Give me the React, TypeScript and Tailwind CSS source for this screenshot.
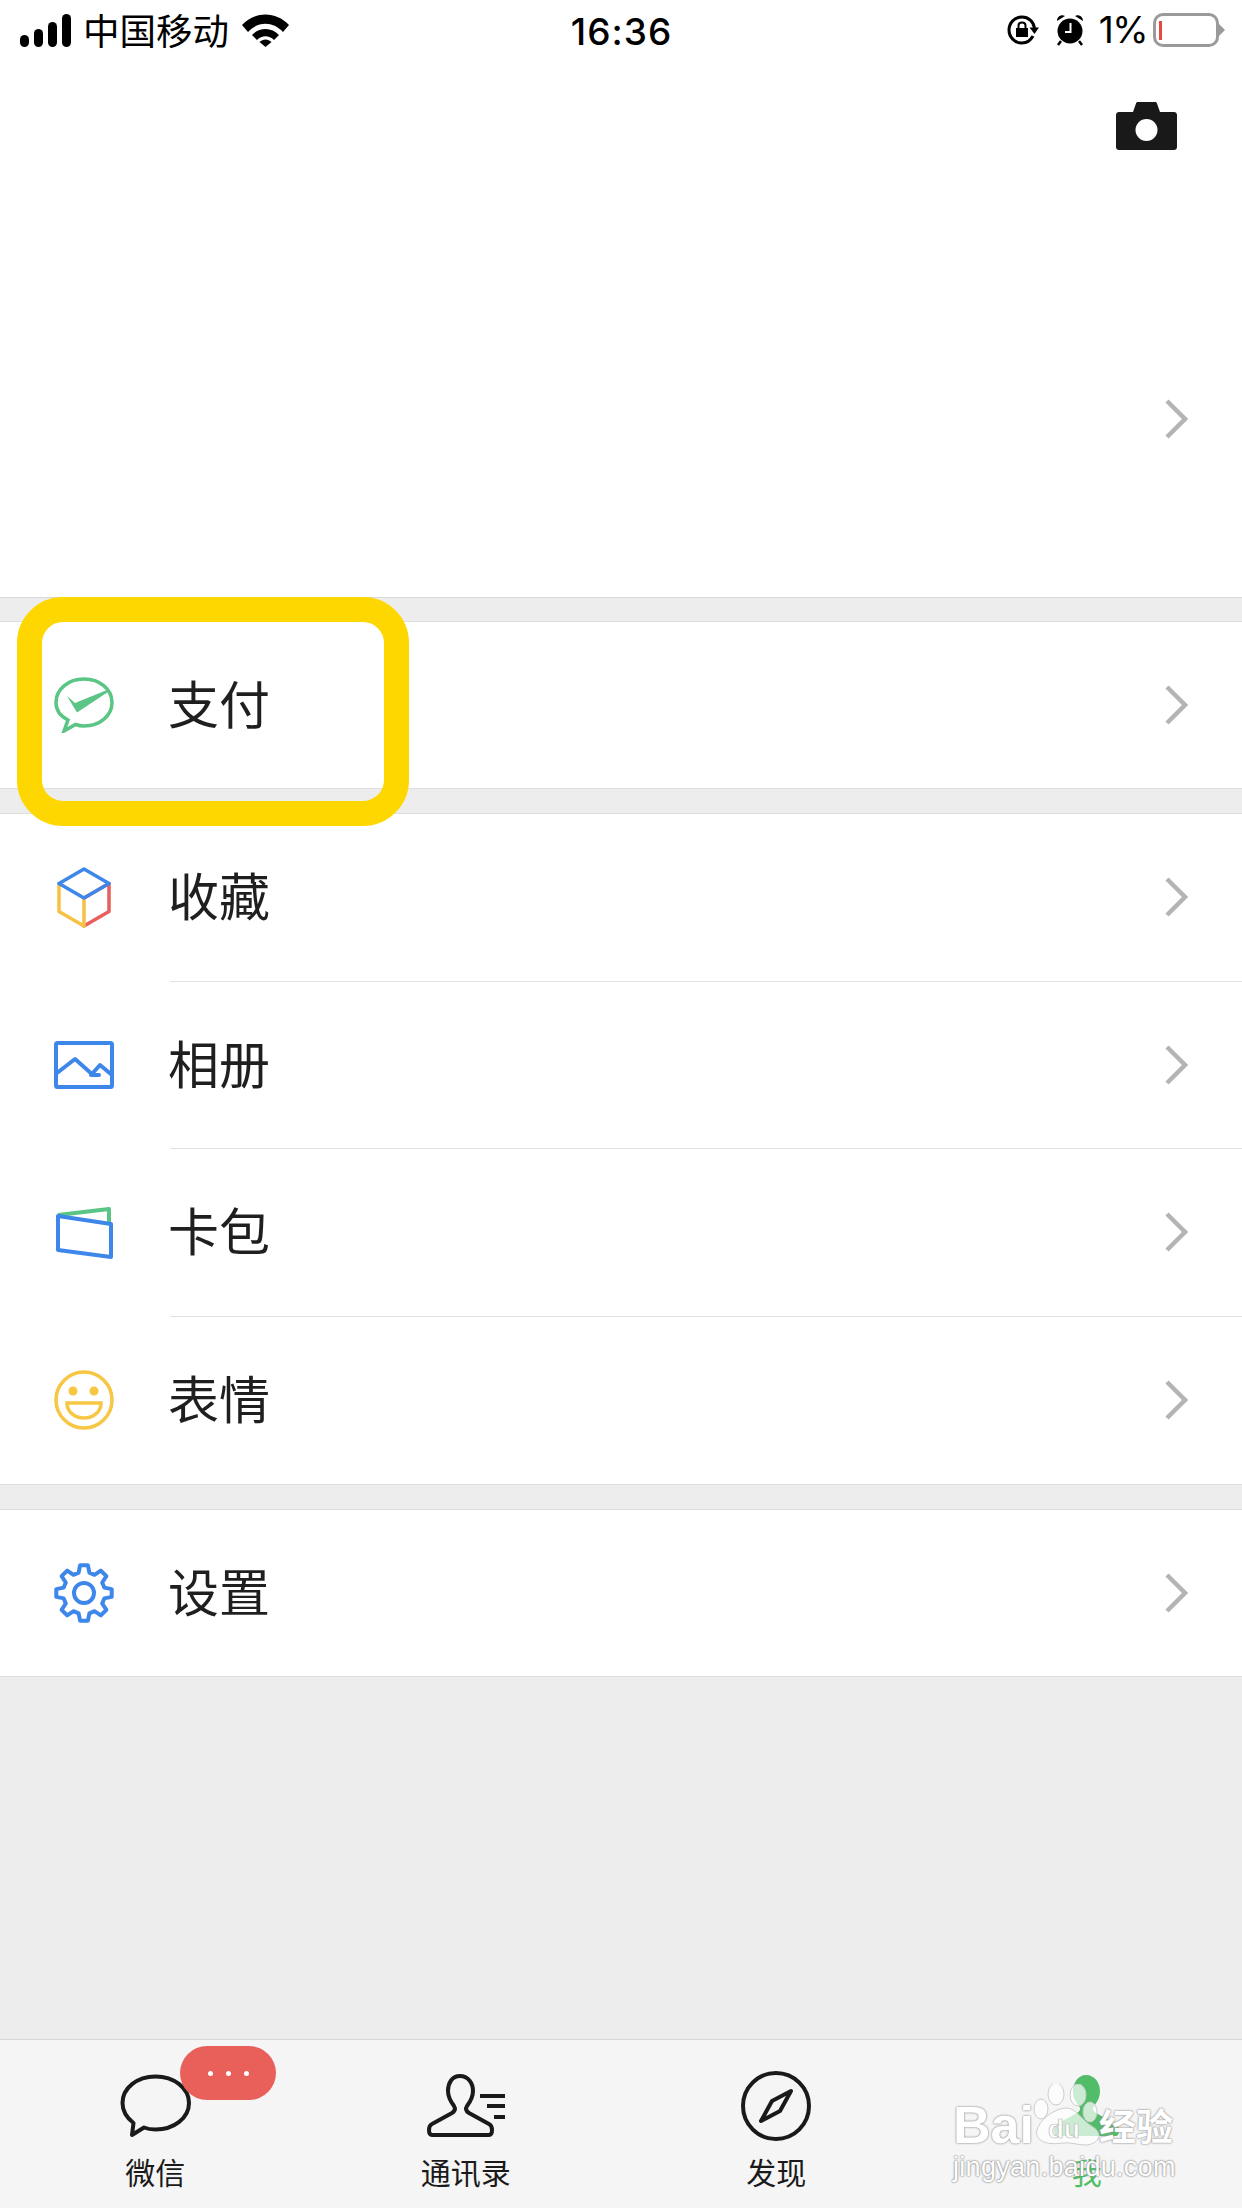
const FONT = "font-['Noto_Sans_CJK_SC','Noto_Sans',sans-serif]"

function Chevron() {
  return (
    <svg width="24" height="40" viewBox="0 0 24 40" fill="none" className="shrink-0">
      <path d="M3 2L21 20L3 38" stroke="#b4b4b4" strokeWidth="4.500" />
    </svg>
  )
}

function PayIcon() {
  return (
    <svg width="60" height="56" viewBox="0 0 60 56" fill="none">
      <path d="M14 43C6 39 2 32.500 2 25.500C2 12.500 14 2 30 2C46 2 58 12.500 58 25.500C58 38.500 46 49 30 49C27 49 24.500 48.500 21.500 47.500L10 54Z" stroke="#5ac584" strokeWidth="3.500" />
      <path d="M13 19L21 26L53 13L54 15L23 35.500Z" fill="#5ac584" />
    </svg>
  )
}

function CubeIcon() {
  return (
    <svg width="54" height="61" viewBox="0 0 54 61" fill="none" strokeWidth="3.500" strokeLinejoin="round" strokeLinecap="round">
      <path d="M27 31L52 16.500V44.500L27 59" stroke="#e85f5c" />
      <path d="M27 31V59L2 44.500V16.500" stroke="#f7c143" />
      <path d="M27 2L52 16.500L27 31L2 16.500Z" stroke="#3e87ea" />
    </svg>
  )
}

function AlbumIcon() {
  return (
    <svg width="60" height="48" viewBox="0 0 60 48" fill="none" stroke="#3e87ea" strokeWidth="4" strokeLinejoin="round">
      <rect x="2" y="2" width="56" height="44" rx="1.500" />
      <path d="M3 32L21 18L39 34H45H37L46 24L58 34" />
    </svg>
  )
}

function CardIcon() {
  return (
    <svg width="57" height="52" viewBox="0 0 57 52" fill="none" strokeWidth="4" strokeLinejoin="round">
      <path d="M2 8L53 2V16" stroke="#5ac584" />
      <path d="M2 9L55 17V50L2 43Z" stroke="#3e87ea" />
    </svg>
  )
}

function SmileIcon() {
  return (
    <svg width="60" height="60" viewBox="0 0 60 60" fill="none">
      <circle cx="30" cy="30" r="28" stroke="#f7c643" strokeWidth="3.500" />
      <circle cx="19" cy="21" r="4.500" fill="#f7c643" />
      <circle cx="40" cy="21" r="4.500" fill="#f7c643" />
      <path d="M13 33H47C47 42 39 48 30 48C21 48 13 42 13 33Z" stroke="#f7c643" strokeWidth="3.500" />
    </svg>
  )
}

function gearPath() {
  const pts: string[] = []
  for (let i = 0; i < 8; i++) {
    const a = (i * Math.PI) / 4 - Math.PI / 2
    const p = (r: number, off: number) =>
      `${(30 + r * Math.cos(a + off)).toFixed(1)} ${(30 + r * Math.sin(a + off)).toFixed(1)}`
    pts.push(`${i === 0 ? 'M' : 'L'}${p(21, -0.26)}L${p(28, -0.14)}L${p(28, 0.14)}L${p(21, 0.26)}`)
  }
  return pts.join('') + 'Z'
}

function GearIcon() {
  return (
    <svg width="60" height="60" viewBox="0 0 60 60" fill="none" stroke="#3e87ea" strokeWidth="4" strokeLinejoin="round">
      <path d={gearPath()} />
      <circle cx="30" cy="30" r="10" />
    </svg>
  )
}

function Row({ icon, label, divider, short }: { icon: React.ReactNode; label: string; divider?: boolean; short?: boolean }) {
  return (
    <div className={`flex items-stretch bg-white ${short ? 'h-[166px]' : 'h-[167.500px]'}`}>
      <div className="flex w-[170px] shrink-0 items-center pl-[54px]">
        <div className="flex w-[60px] items-center justify-center">{icon}</div>
      </div>
      <div className={`flex flex-1 items-center justify-between pr-[54px] ${divider ? 'border-b border-[#e2e2e2]' : ''}`}>
        <span className="-ml-[2px] pb-[5px] text-[51px] leading-none text-[#1f1f1f]">{label}</span>
        <Chevron />
      </div>
    </div>
  )
}

function StatusBar() {
  return (
    <div className="flex h-[60px] items-start justify-between px-[17px] pt-[13px] text-black">
      <div className="flex flex-1 items-center pl-[3px]">
        <div className="flex h-[33px] items-end gap-[5px]">
          <div className="h-[12px] w-[9px] rounded-full bg-black" />
          <div className="h-[18px] w-[9px] rounded-full bg-black" />
          <div className="h-[25px] w-[9px] rounded-full bg-black" />
          <div className="h-[33px] w-[9px] rounded-full bg-black" />
        </div>
        <span className="ml-[12px] whitespace-nowrap text-[36.500px] leading-[34px]">中国移动</span>
        <svg width="47" height="33" viewBox="0 0 47 33" className="ml-[13px]">
          <path d="M0 11C13 -3 34 -3 47 11L41 18C31 7 16 7 6 18Z" fill="#000" />
          <path d="M10 21C17 13 30 13 37 21L32 26C27 21 20 21 15 26Z" fill="#000" />
          <path d="M17.500 28C21 24.500 26 24.500 29.500 28L23.500 33Z" fill="#000" />
        </svg>
      </div>
      <span className="-mt-[1px] mr-[2px] font-['Inter',sans-serif] text-[37px] font-medium leading-[40px] tracking-[1px]">16:36</span>
      <div className="flex flex-1 items-center justify-end">
        <svg width="32" height="30" viewBox="0 0 32 30" fill="none">
          <path d="M26 21C23.500 25.500 19.500 28 15 28C7.500 28 2 22 2 15C2 8 7.500 2 15 2C21.500 2 26.500 6.500 27.500 13" stroke="#000" strokeWidth="3" />
          <path d="M22.500 12.500H32L27.500 19Z" fill="#000" />
          <rect x="9" y="13" width="12" height="9" fill="#000" />
          <path d="M11.500 13V10.500C11.500 6.500 18.500 6.500 18.500 10.500V13" stroke="#000" strokeWidth="2" />
        </svg>
        <svg width="28" height="32" viewBox="0 0 28 32" className="ml-[17px]">
          <circle cx="14" cy="17" r="12.500" fill="#000" />
          <path d="M1 7C1 2 6 0 9 2Z M27 7C27 2 22 0 19 2Z" fill="#000" />
          <path d="M5 27L2 31M23 27L26 31" stroke="#000" strokeWidth="2.500" />
          <path d="M14.500 9V18H9" stroke="#fff" strokeWidth="2" fill="none" />
        </svg>
        <span className="ml-[15px] font-['Inter',sans-serif] text-[37px] leading-[34px] tracking-[-1.500px]">1%</span>
        <div className="ml-[6px] flex items-center">
          <div className="flex h-[34px] w-[66px] items-center rounded-[10px] border-[3px] border-[#9a9a9a] pl-[3px]">
            <div className="h-[19px] w-[3px] bg-[#e8483f]" />
          </div>
          <div className="h-0 w-0 border-y-[6px] border-l-[6px] border-y-transparent border-l-[#9a9a9a]" />
        </div>
      </div>
    </div>
  )
}

function ChatTab() {
  return (
    <svg width="72" height="64" viewBox="0 0 72 64" fill="none" className="ml-[2px]">
      <path d="M13.500 49C6.500 43.500 2.500 37 2.500 29C2.500 14 17 2.500 35.500 2.500C54 2.500 69 14 69 29C69 44 54 55.500 35.500 55.500C31.500 55.500 27.500 55 24 53.500L12 61Z" stroke="#1a1a1a" strokeWidth="4" strokeLinejoin="round" />
    </svg>
  )
}

function ContactsTab() {
  return (
    <svg width="78" height="64" viewBox="0 0 78 64" fill="none">
      <path d="M33 2C25 2 21 9 21 17C21 24 24 28 27 32C29 35 28 37 25 39L5 50C1 52 1 61 5 61H62C66 61 66 52 62 50L42 39C39 37 38 35 40 32C43 28 46 24 46 17C46 9 41 2 33 2Z" stroke="#1a1a1a" strokeWidth="4" strokeLinejoin="round" />
      <rect x="53" y="20" width="25" height="4" fill="#1a1a1a" />
      <rect x="60" y="30" width="18" height="4" fill="#1a1a1a" />
      <rect x="67" y="41" width="11" height="4" fill="#1a1a1a" />
    </svg>
  )
}

function DiscoverTab() {
  return (
    <svg width="70" height="70" viewBox="0 0 70 70" fill="none" stroke="#1a1a1a" strokeWidth="4" strokeLinejoin="round">
      <circle cx="35" cy="35" r="33" />
      <path d="M50 20L31 30L20 50L39 40Z" />
    </svg>
  )
}

function MeTab() {
  return (
    <svg width="67" height="64" viewBox="0 0 67 64">
      <path d="M33 1C25 1 20 9 20 17C20 24 23 28 26 32C28 35 27 37 24 39L4 50C0 52 0 62 4 62H63C67 62 67 52 63 50L43 39C40 37 39 35 41 32C44 28 47 24 47 17C47 9 42 1 33 1Z" fill="#52bd69" />
    </svg>
  )
}

function Tab({ icon, label, active, children }: { icon: React.ReactNode; label: string; active?: boolean; children?: React.ReactNode }) {
  return (
    <div className="relative flex flex-col items-center">
      <div className="flex h-[72px] items-center">{icon}</div>
      <span className={`mt-[12px] text-[30px] leading-[34px] ${active ? 'text-[#52bd69]' : 'text-[#1a1a1a]'}`}>{label}</span>
      {children}
    </div>
  )
}

function Watermark() {
  return (
    <div className="absolute left-[953px] top-[2084px] flex flex-col items-start whitespace-nowrap text-white">
      <div className="flex h-[62px] items-end">
        <span className="font-['Liberation_Sans',sans-serif] text-[52px] font-bold leading-[42px] [text-shadow:0_0_2px_#999,0_0_2px_#999]">Bai</span>
        <svg width="78" height="62" viewBox="0 0 78 62" className="-ml-[3px] shrink-0">
          <g fill="#fff" fillOpacity="0.7" stroke="#ccc" strokeWidth="1">
            <ellipse cx="25" cy="10" rx="8" ry="11" />
            <ellipse cx="47" cy="11" rx="8" ry="11" />
            <ellipse cx="10" cy="25" rx="7" ry="10" />
            <ellipse cx="59" cy="28" rx="7" ry="10" />
            <path d="M35 24C46 24 50 36 62 43C74 51 66 61 54 61C46 61 40 58 32 59C20 61 3 59 6 46C8 36 24 24 35 24Z" />
          </g>
          <text x="17" y="54" fontSize="26" fontWeight="700" fill="#fff" stroke="#bbb" strokeWidth="0.700" fontFamily="Liberation Sans">du</text>
        </svg>
        <span className="-ml-[10px] text-[37px] font-bold leading-[42px] [text-shadow:0_0_2px_#999,0_0_2px_#999]">经验</span>
      </div>
      <span className="mt-[5px] font-['Liberation_Sans',sans-serif] text-[27px] leading-[32px] tracking-[0.300px] [text-shadow:0_0_2px_#888,0_0_2px_#888]">jingyan.baidu.com</span>
    </div>
  )
}

export default function App() {
  return (
    <div className={`relative flex h-[2208px] w-[1242px] flex-col overflow-hidden bg-[#ededed] ${FONT}`}>
      <div className="flex h-[598px] flex-col border-b border-[#d9d9d9] bg-white">
        <StatusBar />
        <div className="mt-[42px] flex justify-end pr-[65px]">
          <svg width="61" height="48" viewBox="0 0 61 48">
            <path d="M3 10H17L20 1.500C20.300 0.500 21 0 22 0H39C40 0 40.700 0.500 41 1.500L44 10H58C59.700 10 61 11.300 61 13V45C61 46.700 59.700 48 58 48H3C1.300 48 0 46.700 0 45V13C0 11.300 1.300 10 3 10Z" fill="#191919" />
            <circle cx="30.500" cy="28" r="11" fill="#fff" />
          </svg>
        </div>
        <div className="mt-[249px] flex justify-end pr-[54px]">
          <Chevron />
        </div>
      </div>

      <div className="mt-[23px] border-y border-[#dedede]">
        <Row icon={<PayIcon />} label="支付" short />
      </div>

      <div className="mt-[24px] border-y border-[#dedede]">
        <Row icon={<CubeIcon />} label="收藏" divider />
        <Row icon={<AlbumIcon />} label="相册" divider />
        <Row icon={<CardIcon />} label="卡包" divider />
        <Row icon={<SmileIcon />} label="表情" />
      </div>

      <div className="mt-[24px] border-y border-[#dedede]">
        <Row icon={<GearIcon />} label="设置" short />
      </div>

      <div className="flex-1" />

      <div className="grid h-[169px] grid-cols-4 border-t border-[#d6d6d6] bg-[#f5f5f5] pt-[30px]">
        <Tab icon={<ChatTab />} label="微信">
          <div className="absolute left-[180px] top-[-24px] flex h-[54px] w-[96px] items-center justify-center gap-[13px] rounded-full bg-[#e9605b]">
            <div className="h-[5px] w-[5px] rounded-full bg-white" />
            <div className="h-[5px] w-[5px] rounded-full bg-white" />
            <div className="h-[5px] w-[5px] rounded-full bg-white" />
          </div>
        </Tab>
        <Tab icon={<ContactsTab />} label="通讯录" />
        <Tab icon={<DiscoverTab />} label="发现" />
        <Tab icon={<MeTab />} label="我" active />
      </div>

      <div className="absolute left-[17px] top-[597px] h-[229px] w-[392px] rounded-[46px] border-[25px] border-[#ffd700]" />
      <Watermark />
    </div>
  )
}
